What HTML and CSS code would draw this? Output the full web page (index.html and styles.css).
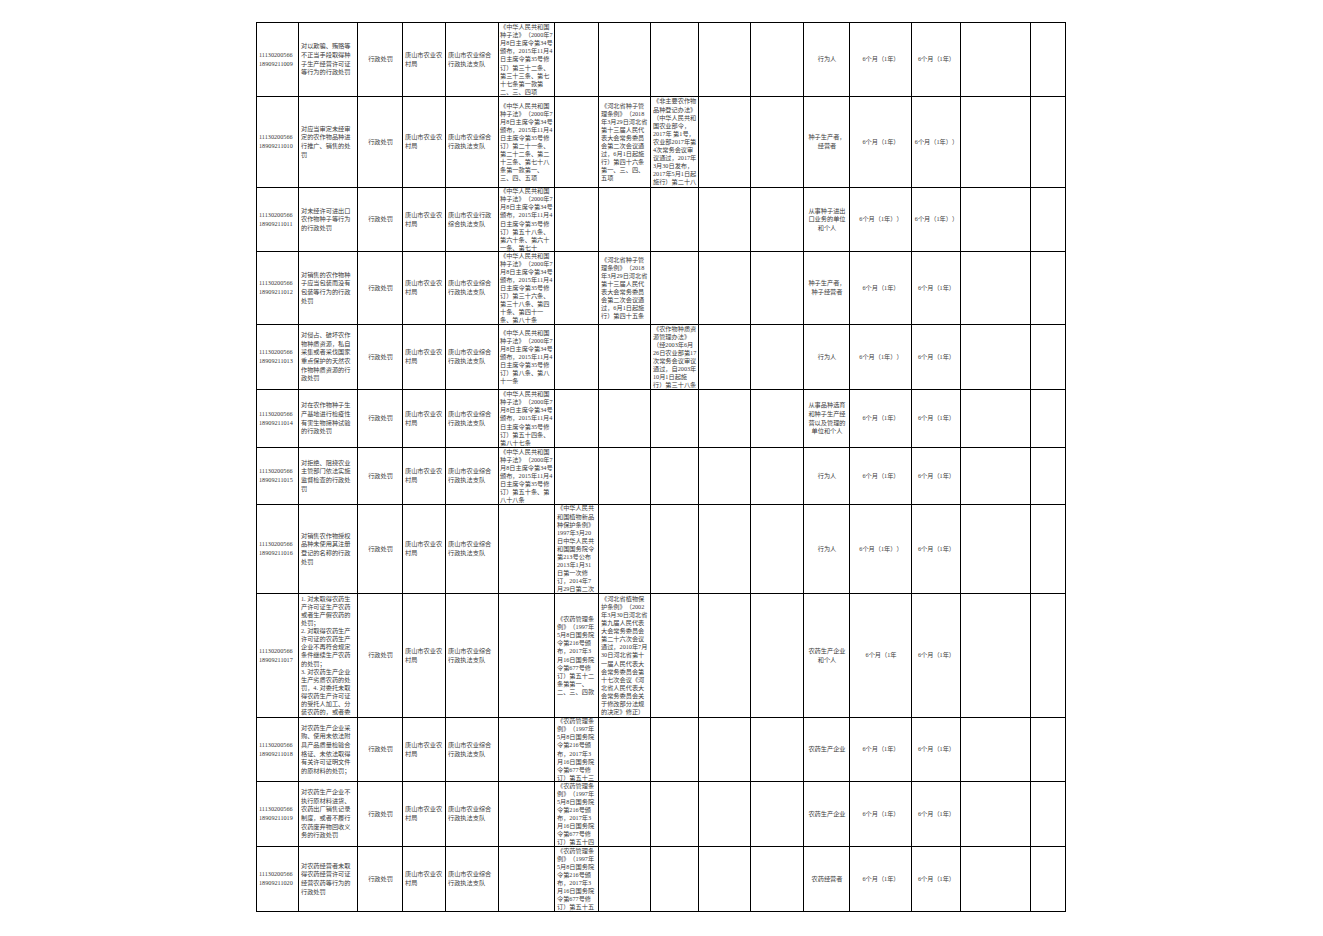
FILE: index.html
```html
<!DOCTYPE html>
<html lang="zh-CN">
<head>
<meta charset="utf-8">
<title>行政处罚事项清单</title>
<link rel="stylesheet" href="styles.css">
</head>
<body>
<div class="sheet">
  <!-- row 1 -->
  <div class="c"><div>11130200566<br>18909211009</div></div>
  <div class="c"><div>对以欺骗、贿赂等不正当手段取得种子生产经营许可证等行为的行政处罚</div></div>
  <div class="c m"><div>行政处罚</div></div>
  <div class="c"><div>唐山市农业农村局</div></div>
  <div class="c"><div>唐山市农业综合行政执法支队</div></div>
  <div class="c law w6"><div>《中华人民共和国种子法》（2000年7月8日主席令第34号颁布，2015年11月4日主席令第35号修订）第三十二条、第三十三条、第七十七条第一款第二、三、四项</div></div>
  <div class="c"></div>
  <div class="c"></div>
  <div class="c"></div>
  <div class="c"></div>
  <div class="c"></div>
  <div class="c m"><div>行为人</div></div>
  <div class="c m"><div>6个月（1年）</div></div>
  <div class="c m"><div>6个月（1年）</div></div>
  <div class="c"></div>
  <div class="c"></div>

  <!-- row 2 -->
  <div class="c"><div>11130200566<br>18909211010</div></div>
  <div class="c"><div>对应当审定未经审定的农作物品种进行推广、销售的处罚</div></div>
  <div class="c m"><div>行政处罚</div></div>
  <div class="c"><div>唐山市农业农村局</div></div>
  <div class="c"><div>唐山市农业综合行政执法支队</div></div>
  <div class="c law w6"><div>《中华人民共和国种子法》（2000年7月8日主席令第34号颁布，2015年11月4日主席令第35号修订）第二十一条、第二十二条、第二十三条、第七十八条第一款第一、三、四、五项</div></div>
  <div class="c"></div>
  <div class="c law"><div>《河北省种子管理条例》（2018年3月29日河北省第十三届人民代表大会常务委员会第二次会议通过，6月1日起施行）第四十六条第一、三、四、五项</div></div>
  <div class="c law"><div>《非主要农作物品种登记办法》（中华人民共和国农业部令，2017年 第1号，农业部2017年第4次常务会议审议通过，2017年3月30日发布，2017年5月1日起施行）第二十八</div></div>
  <div class="c"></div>
  <div class="c"></div>
  <div class="c m"><div>种子生产者，经营者</div></div>
  <div class="c m"><div>6个月（1年）</div></div>
  <div class="c m"><div>6个月（1年））</div></div>
  <div class="c"></div>
  <div class="c"></div>

  <!-- row 3 -->
  <div class="c"><div>11130200566<br>18909211011</div></div>
  <div class="c"><div>对未经许可进出口农作物种子等行为的行政处罚</div></div>
  <div class="c m"><div>行政处罚</div></div>
  <div class="c"><div>唐山市农业农村局</div></div>
  <div class="c"><div>唐山市农业行政综合执法支队</div></div>
  <div class="c law w6"><div>《中华人民共和国种子法》（2000年7月8日主席令第34号颁布，2015年11月4日主席令第35号修订）第五十八条、第六十条、第六十一条、第七十</div></div>
  <div class="c"></div>
  <div class="c"></div>
  <div class="c"></div>
  <div class="c"></div>
  <div class="c"></div>
  <div class="c m"><div>从事种子进出口业务的单位和个人</div></div>
  <div class="c m"><div>6个月（1年））</div></div>
  <div class="c m"><div>6个月（1年））</div></div>
  <div class="c"></div>
  <div class="c"></div>

  <!-- row 4 -->
  <div class="c"><div>11130200566<br>18909211012</div></div>
  <div class="c"><div>对销售的农作物种子应当包装而没有包装等行为的行政处罚</div></div>
  <div class="c m"><div>行政处罚</div></div>
  <div class="c"><div>唐山市农业农村局</div></div>
  <div class="c"><div>唐山市农业综合行政执法支队</div></div>
  <div class="c law w6"><div>《中华人民共和国种子法》（2000年7月8日主席令第34号颁布，2015年11月4日主席令第35号修订）第三十六条、第三十八条、第四十条、第四十一条、第八十条</div></div>
  <div class="c"></div>
  <div class="c law"><div>《河北省种子管理条例》（2018年3月29日河北省第十三届人民代表大会常务委员会第二次会议通过，6月1日起施行）第四十五条</div></div>
  <div class="c"></div>
  <div class="c"></div>
  <div class="c"></div>
  <div class="c m"><div>种子生产者，种子经营者</div></div>
  <div class="c m"><div>6个月（1年）</div></div>
  <div class="c m"><div>6个月（1年）</div></div>
  <div class="c"></div>
  <div class="c"></div>

  <!-- row 5 -->
  <div class="c"><div>11130200566<br>18909211013</div></div>
  <div class="c"><div>对侵占、破坏农作物种质资源，私自采集或者采伐国家重点保护的天然农作物种质资源的行政处罚</div></div>
  <div class="c m"><div>行政处罚</div></div>
  <div class="c"><div>唐山市农业农村局</div></div>
  <div class="c"><div>唐山市农业综合行政执法支队</div></div>
  <div class="c law w6"><div>《中华人民共和国种子法》（2000年7月8日主席令第34号颁布，2015年11月4日主席令第35号修订）第八条、第八十一条</div></div>
  <div class="c"></div>
  <div class="c"></div>
  <div class="c law"><div>《农作物种质资源管理办法》（经2003年6月26日农业部第17次常务会议审议通过，自2003年10月1日起施行）第三十八条</div></div>
  <div class="c"></div>
  <div class="c"></div>
  <div class="c m"><div>行为人</div></div>
  <div class="c m"><div>6个月（1年））</div></div>
  <div class="c m"><div>6个月（1年）</div></div>
  <div class="c"></div>
  <div class="c"></div>

  <!-- row 6 -->
  <div class="c"><div>11130200566<br>18909211014</div></div>
  <div class="c"><div>对在农作物种子生产基地进行检疫性有害生物接种试验的行政处罚</div></div>
  <div class="c m"><div>行政处罚</div></div>
  <div class="c"><div>唐山市农业农村局</div></div>
  <div class="c"><div>唐山市农业综合行政执法支队</div></div>
  <div class="c law w6"><div>《中华人民共和国种子法》（2000年7月8日主席令第34号颁布，2015年11月4日主席令第35号修订）第五十四条、第八十七条</div></div>
  <div class="c"></div>
  <div class="c"></div>
  <div class="c"></div>
  <div class="c"></div>
  <div class="c"></div>
  <div class="c m"><div>从事品种选育和种子生产经营以及管理的单位和个人</div></div>
  <div class="c m"><div>6个月（1年）</div></div>
  <div class="c m"><div>6个月（1年）</div></div>
  <div class="c"></div>
  <div class="c"></div>

  <!-- row 7 -->
  <div class="c"><div>11130200566<br>18909211015</div></div>
  <div class="c"><div>对拒绝、阻挠农业主管部门依法实施监督检查的行政处罚</div></div>
  <div class="c m"><div>行政处罚</div></div>
  <div class="c"><div>唐山市农业农村局</div></div>
  <div class="c"><div>唐山市农业综合行政执法支队</div></div>
  <div class="c law w6"><div>《中华人民共和国种子法》（2000年7月8日主席令第34号颁布，2015年11月4日主席令第35号修订）第五十条、第八十八条</div></div>
  <div class="c"></div>
  <div class="c"></div>
  <div class="c"></div>
  <div class="c"></div>
  <div class="c"></div>
  <div class="c m"><div>行为人</div></div>
  <div class="c m"><div>6个月（1年）</div></div>
  <div class="c m"><div>6个月（1年）</div></div>
  <div class="c"></div>
  <div class="c"></div>

  <!-- row 8 -->
  <div class="c"><div>11130200566<br>18909211016</div></div>
  <div class="c"><div>对销售农作物授权品种未使用其注册登记的名称的行政处罚</div></div>
  <div class="c m"><div>行政处罚</div></div>
  <div class="c"><div>唐山市农业农村局</div></div>
  <div class="c"><div>唐山市农业综合行政执法支队</div></div>
  <div class="c"></div>
  <div class="c law"><div>《中华人民共和国植物新品种保护条例》1997年3月20日中华人民共和国国务院令第213号公布2013年1月31日第一次修订，2014年7月29日第二次</div></div>
  <div class="c"></div>
  <div class="c"></div>
  <div class="c"></div>
  <div class="c"></div>
  <div class="c m"><div>行为人</div></div>
  <div class="c m"><div>6个月（1年））</div></div>
  <div class="c m"><div>6个月（1年）</div></div>
  <div class="c"></div>
  <div class="c"></div>

  <!-- row 9 -->
  <div class="c"><div>11130200566<br>18909211017</div></div>
  <div class="c law"><div>1. 对未取得农药生产许可证生产农药或者生产假农药的处罚；<br>2. 对取得农药生产许可证的农药生产企业不再符合规定条件继续生产农药的处罚；<br>3. 对农药生产企业生产劣质农药的处罚，4. 对委托未取得农药生产许可证的受托人加工、分装农药的，或者委</div></div>
  <div class="c m"><div>行政处罚</div></div>
  <div class="c"><div>唐山市农业农村局</div></div>
  <div class="c"><div>唐山市农业综合行政执法支队</div></div>
  <div class="c"></div>
  <div class="c law"><div>《农药管理条例》（1997年5月8日国务院令第216号颁布，2017年3月16日国务院令第677号修订）第五十二条第第一、二、三、四款</div></div>
  <div class="c law"><div>《河北省植物保护条例》（2002年3月30日河北省第九届人民代表大会常务委员会第二十六次会议通过，2010年7月30日河北省第十一届人民代表大会常务委员会第十七次会议《河北省人民代表大会常务委员会关于修改部分法规的决定》修正）</div></div>
  <div class="c"></div>
  <div class="c"></div>
  <div class="c"></div>
  <div class="c m"><div>农药生产企业和个人</div></div>
  <div class="c m"><div>6个月（1年</div></div>
  <div class="c m"><div>6个月（1年）</div></div>
  <div class="c"></div>
  <div class="c"></div>

  <!-- row 10 -->
  <div class="c"><div>11130200566<br>18909211018</div></div>
  <div class="c"><div>对农药生产企业采购、使用未依法附具产品质量检验合格证、未依法取得有关许可证明文件的原材料的处罚；</div></div>
  <div class="c m"><div>行政处罚</div></div>
  <div class="c"><div>唐山市农业农村局</div></div>
  <div class="c"><div>唐山市农业综合行政执法支队</div></div>
  <div class="c"></div>
  <div class="c law"><div>《农药管理条例》（1997年5月8日国务院令第216号颁布，2017年3月16日国务院令第677号修订）第五十三</div></div>
  <div class="c"></div>
  <div class="c"></div>
  <div class="c"></div>
  <div class="c"></div>
  <div class="c m"><div>农药生产企业</div></div>
  <div class="c m"><div>6个月（1年）</div></div>
  <div class="c m"><div>6个月（1年）</div></div>
  <div class="c"></div>
  <div class="c"></div>

  <!-- row 11 -->
  <div class="c"><div>11130200566<br>18909211019</div></div>
  <div class="c"><div>对农药生产企业不执行原材料进货、农药出厂销售记录制度，或者不履行农药废弃物回收义务的行政处罚</div></div>
  <div class="c m"><div>行政处罚</div></div>
  <div class="c"><div>唐山市农业农村局</div></div>
  <div class="c"><div>唐山市农业综合行政执法支队</div></div>
  <div class="c"></div>
  <div class="c law"><div>《农药管理条例》（1997年5月8日国务院令第216号颁布，2017年3月16日国务院令第677号修订）第五十四</div></div>
  <div class="c"></div>
  <div class="c"></div>
  <div class="c"></div>
  <div class="c"></div>
  <div class="c m"><div>农药生产企业</div></div>
  <div class="c m"><div>6个月（1年）</div></div>
  <div class="c m"><div>6个月（1年）</div></div>
  <div class="c"></div>
  <div class="c"></div>

  <!-- row 12 -->
  <div class="c"><div>11130200566<br>18909211020</div></div>
  <div class="c"><div>对农药经营者未取得农药经营许可证经营农药等行为的行政处罚</div></div>
  <div class="c m"><div>行政处罚</div></div>
  <div class="c"><div>唐山市农业农村局</div></div>
  <div class="c"><div>唐山市农业综合行政执法支队</div></div>
  <div class="c"></div>
  <div class="c law"><div>《农药管理条例》（1997年5月8日国务院令第216号颁布，2017年3月16日国务院令第677号修订）第五十五</div></div>
  <div class="c"></div>
  <div class="c"></div>
  <div class="c"></div>
  <div class="c"></div>
  <div class="c m"><div>农药经营者</div></div>
  <div class="c m"><div>6个月（1年）</div></div>
  <div class="c m"><div>6个月（1年）</div></div>
  <div class="c"></div>
  <div class="c"></div>
</div>
</body>
</html>
```

FILE: styles.css
```css
html, body {
  margin: 0;
  padding: 0;
  background: #ffffff;
}

body {
  font-family: "Liberation Serif", "Noto Sans CJK SC", serif;
  font-size: 6.2px;
  line-height: 8.6px;
  color: #3a3a3a;
  text-spacing-trim: space-all;
}

.sheet {
  display: grid;
  width: max-content;
  margin: 22px 0 0 256px;
  border-left: 1px solid #000;
  border-top: 1px solid #000;
  grid-template-columns: 42px 59px 45px 43px 53px 56px 44px 52px 48px 52px 53px 46px 62px 49px 70px 35px;
  grid-template-rows: 74px 91px 64px 73px 65px 58px 57px 89px 124px 64px 65px 65px;
}

.c {
  box-sizing: border-box;
  border-right: 1px solid #000;
  border-bottom: 1px solid #000;
  display: flex;
  align-items: center;
  overflow: hidden;
  padding: 0 1px 0 2px;
  min-width: 0;
  min-height: 0;
}

.c > div {
  width: 100%;
}

.m {
  justify-content: center;
  text-align: center;
}

.law {
  line-height: 8.1px;
}

.w6 {
  padding: 0 1px;
}
```
